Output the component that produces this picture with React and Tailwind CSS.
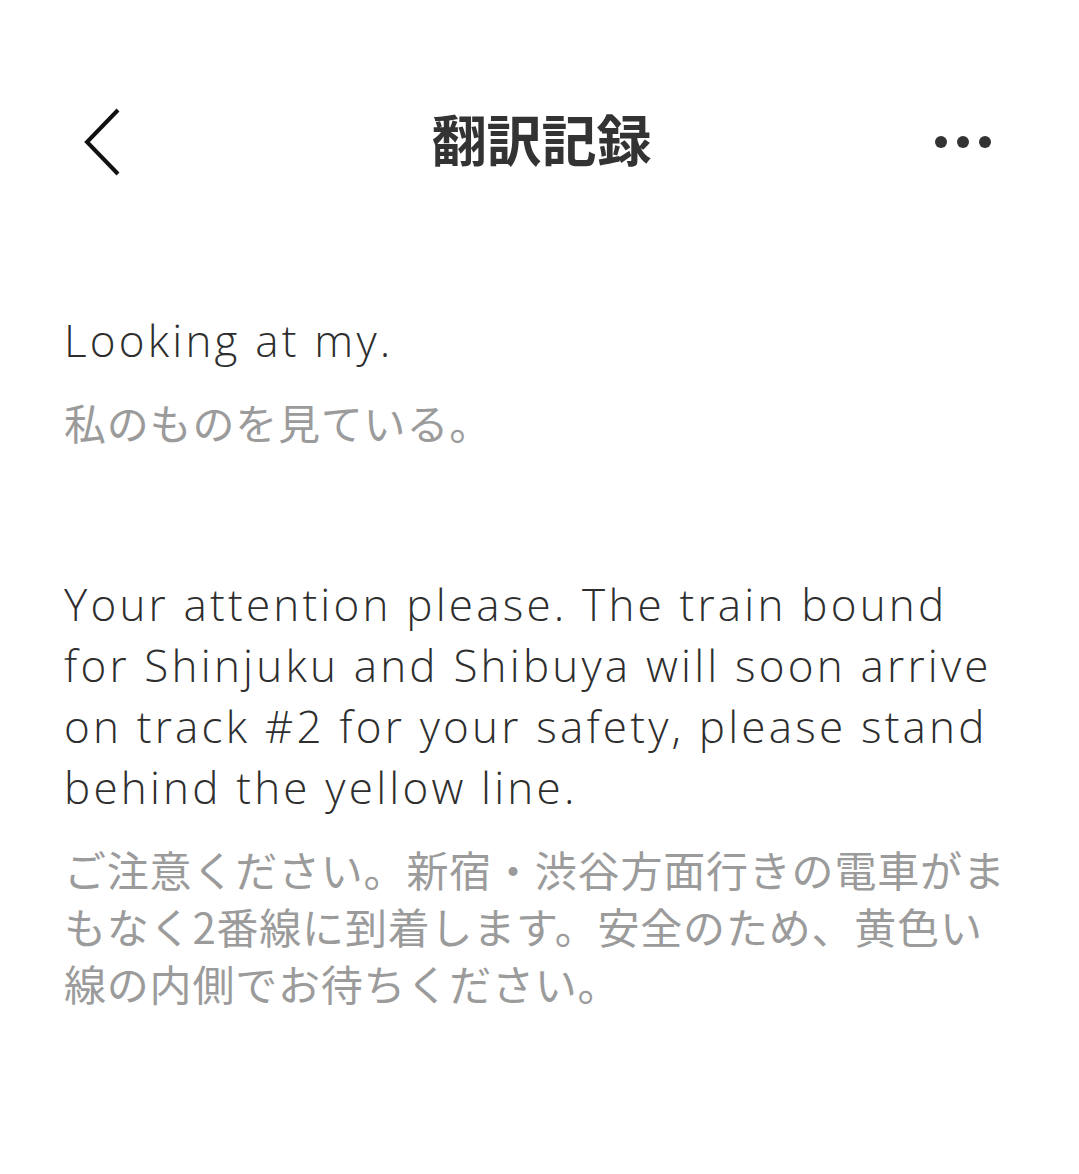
export default function App() {
  const en = { fontFamily: "'Open Sans', Lato, sans-serif" };
  const ja = { fontFamily: "'Noto Sans CJK JP', 'Noto Sans', sans-serif" };

  return (
    <div className="w-[1079px] h-[1174px] bg-white text-[#2e2e2e]">
      {/* Header */}
      <div className="flex items-center pt-[108px] px-[80px] h-[176px]">
        <div className="flex-1 flex items-center">
          <svg width="40" height="68" viewBox="0 0 40 68" fill="none">
            <path d="M38 2 L7 34 L38 66" stroke="#111" strokeWidth="4" />
          </svg>
        </div>
        <h1 className="text-[55px] font-bold leading-none text-[#333] pl-[12px] pb-[9px]" style={ja}>
          翻訳記録
        </h1>
        <div className="flex-1 flex items-center justify-end gap-[10px] pr-[8px]">
          <span className="w-[12px] h-[12px] rounded-full bg-[#333]" />
          <span className="w-[12px] h-[12px] rounded-full bg-[#333]" />
          <span className="w-[12px] h-[12px] rounded-full bg-[#333]" />
        </div>
      </div>

      {/* Records */}
      <div className="px-[64px] pt-[134px] flex flex-col gap-[124px]">
        <div>
          <p className="text-[44px] leading-[61px] font-light tracking-[3.2px]" style={en}>
            Looking at my.
          </p>
          <p className="text-[42px] leading-[57px] mt-[22px] text-[#9b9b9b] tracking-[0.8px]" style={ja}>
            私のものを見ている。
          </p>
        </div>
        <div>
          <p className="text-[44px] leading-[61px] font-light tracking-[3.2px] whitespace-nowrap" style={en}>
            Your attention please. The train bound<br />
            for Shinjuku and Shibuya will soon arrive<br />
            on track #2 for your safety, please stand<br />
            behind the yellow line.
          </p>
          <p className="text-[42px] leading-[57px] mt-[22px] text-[#9b9b9b] tracking-[0.8px] whitespace-nowrap" style={ja}>
            ご注意ください。新宿・渋谷方面行きの電車がま<br />
            もなく2番線に到着します。安全のため、黄色い<br />
            線の内側でお待ちください。
          </p>
        </div>
      </div>
    </div>
  );
}
